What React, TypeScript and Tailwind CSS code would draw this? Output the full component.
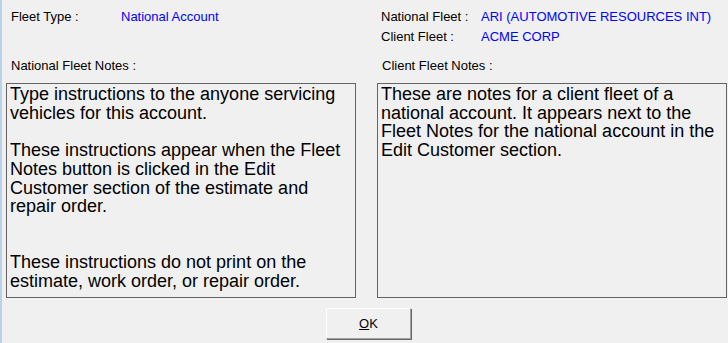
import React from "react";

function Row({ label, value, valueLeft }: { label: string; value: string; valueLeft: string }) {
  return (
    <div className="flex h-[20px] leading-[15px]">
      <span className={"shrink-0 " + valueLeft}>{label}</span>
      <span className="text-[#0000ff] whitespace-nowrap">{value}</span>
    </div>
  );
}

function NotesBox({ children }: { children: React.ReactNode }) {
  return (
    <div className="h-[215px] border border-[#646464] pl-[3px] pt-[1px] text-[18px] leading-[18.7px] text-black font-['Liberation_Sans',Arial,sans-serif]">
      {children}
    </div>
  );
}

export default function App() {
  return (
    <div className="w-[728px] h-[343px] bg-[#f0f0f0] border-l-2 border-[#b9d1ea] font-['Liberation_Sans',Arial,sans-serif] text-[13px] text-black overflow-hidden">
      <div className="grid grid-cols-[350px_350px] gap-x-[21px] pl-[4px]">
        {/* left column */}
        <div>
          <div className="h-[58px] pt-[9px] pl-[5px]">
            <Row label="Fleet Type :" value="National Account" valueLeft="w-[110px]" />
          </div>
          <div className="h-[25px] pl-[5px] leading-[15px]">National Fleet Notes :</div>
          <NotesBox>
            <p>Type instructions to the anyone servicing vehicles for this account.</p>
            <p className="mt-[18.7px]">
              These instructions appear when the Fleet Notes button is clicked in the Edit Customer section of
              the estimate and repair order.
            </p>
            <p className="mt-[37.4px]">These instructions do not print on the estimate, work order, or repair order.</p>
          </NotesBox>
        </div>
        {/* right column */}
        <div>
          <div className="h-[58px] pt-[9px] pl-[4px]">
            <Row label="National Fleet :" value="ARI (AUTOMOTIVE RESOURCES INT)" valueLeft="w-[100px]" />
            <Row label="Client Fleet :" value="ACME CORP" valueLeft="w-[100px]" />
          </div>
          <div className="h-[25px] pl-[5px] leading-[15px]">Client Fleet Notes :</div>
          <NotesBox>
            <p>
              These are notes for a client fleet of a national account. It appears next to the Fleet Notes for
              the national account in the Edit Customer section.
            </p>
          </NotesBox>
        </div>
      </div>
      <div className="flex pl-[324px] mt-[10px]">
        <button className="w-[85px] h-[31px] bg-[#f0f0f0] border border-t-white border-l-white border-r-[#a0a0a0] border-b-[#a0a0a0] shadow-[1px_1px_0_#696969] flex items-center justify-center text-[13px]">
          <span>
            <span className="underline">O</span>K
          </span>
        </button>
      </div>
    </div>
  );
}
